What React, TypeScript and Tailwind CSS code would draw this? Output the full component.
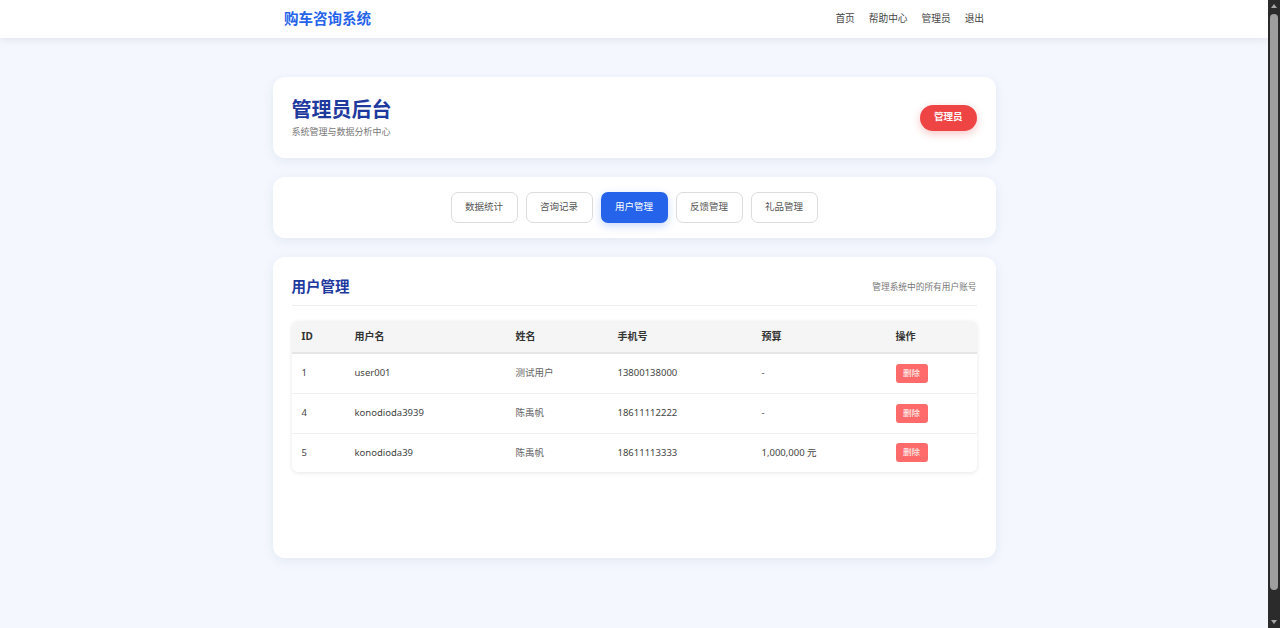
import React from "react";

const users = [
  { id: 1, username: "user001", name: "测试用户", phone: "13800138000", budget: "-" },
  { id: 4, username: "konodioda3939", name: "陈禹帆", phone: "18611112222", budget: "-" },
  { id: 5, username: "konodioda39", name: "陈禹帆", phone: "18611113333", budget: "1,000,000 元" },
];

const tabs = ["数据统计", "咨询记录", "用户管理", "反馈管理", "礼品管理"];

const font = { fontFamily: '"Noto Sans", "Noto Sans CJK SC", sans-serif' };

// the reference was taken with a classic dark scrollbar on the right
function Scrollbar() {
  return (
    <div className="w-[12px] h-full bg-[#2b2b2b] flex flex-col items-center">
      <div className="h-[12px] flex items-center justify-center">
        <div className="w-0 h-0 border-l-[3px] border-r-[3px] border-b-[4px] border-l-transparent border-r-transparent border-b-[#a8a8a8]" />
      </div>
      <div className="w-[8px] flex-1 mt-[2px] mb-[26px] rounded-full bg-[#9e9e9e]" />
      <div className="h-[12px] flex items-center justify-center">
        <div className="w-0 h-0 border-l-[3px] border-r-[3px] border-t-[4px] border-l-transparent border-r-transparent border-t-[#a8a8a8]" />
      </div>
    </div>
  );
}

export default function App() {
  return (
    <div className="h-[628px] flex overflow-hidden text-[#333]" style={font}>
      <div className="flex-1 min-w-0 bg-[#f4f7fe]">
        <nav className="h-[38px] bg-white shadow-[0_2px_8px_rgba(0,0,0,0.08)]">
          <div className="w-[700px] mx-auto h-full flex items-center justify-between">
            <div className="text-[14.5px] font-bold text-[#2563eb]">购车咨询系统</div>
            <div className="flex items-center gap-[14px] text-[9.7px] text-[#444]">
              <span>首页</span>
              <span>帮助中心</span>
              <span>管理员</span>
              <span>退出</span>
            </div>
          </div>
        </nav>

        <main className="w-[723px] mx-auto pt-[39px] flex flex-col gap-[19px]">
          <section className="h-[81px] bg-white rounded-[12px] shadow-[0_3px_12px_rgba(30,60,120,0.08)] px-[19px] flex items-center justify-between">
            <div>
              <h1 className="text-[20px] leading-[26px] font-bold text-[#1e3a9e]">管理员后台</h1>
              <p className="text-[9px] text-[#777] mt-[2px]">系统管理与数据分析中心</p>
            </div>
            <span className="h-[26px] px-[14px] rounded-full bg-[#ef4444] text-white text-[9.5px] font-bold flex items-center shadow-[0_3px_8px_rgba(239,68,68,0.3)]">
              管理员
            </span>
          </section>

          <section className="h-[61px] bg-white rounded-[12px] shadow-[0_3px_12px_rgba(30,60,120,0.08)] flex items-center justify-center gap-[8px]">
            {tabs.map((t) =>
              t === "用户管理" ? (
                <button key={t} className="w-[67px] h-[31px] rounded-[7px] bg-[#2563eb] text-white text-[9.5px] shadow-[0_3px_8px_rgba(37,99,235,0.25)]">
                  {t}
                </button>
              ) : (
                <button key={t} className="w-[67px] h-[31px] rounded-[7px] border border-[#dcdcdc] bg-white text-[#555] text-[9.5px]">
                  {t}
                </button>
              )
            )}
          </section>

          <section className="h-[301px] bg-white rounded-[12px] shadow-[0_3px_12px_rgba(30,60,120,0.08)] px-[19px] pt-[19px]">
            <div className="flex items-center justify-between pb-[8px] border-b border-[#eeeeee]">
              <h2 className="text-[14.5px] leading-[21px] font-bold text-[#1e3a9e]">用户管理</h2>
              <span className="text-[8.7px] text-[#777] mt-[2px]">管理系统中的所有用户账号</span>
            </div>
            <div className="mt-[15px] rounded-[6px] overflow-hidden shadow-[0_1px_4px_rgba(0,0,0,0.1)]">
              <table className="w-full border-collapse text-left">
                <thead>
                  <tr className="h-[32px] bg-[#f5f5f5] border-b-2 border-[#e6e6e6] text-[10px] text-[#333]">
                    <th className="w-[63px] pl-[10px] font-bold">ID</th>
                    <th className="w-[161px] font-bold">用户名</th>
                    <th className="w-[102px] font-bold">姓名</th>
                    <th className="w-[144px] font-bold">手机号</th>
                    <th className="w-[134px] font-bold">预算</th>
                    <th className="font-bold">操作</th>
                  </tr>
                </thead>
                <tbody className="text-[9.5px] text-[#444]">
                  {users.map((u, i) => (
                    <tr key={u.id} className={i < users.length - 1 ? "h-[40px] border-b border-[#f0f0f0]" : "h-[39px]"}>
                      <td className="pl-[10px]">{u.id}</td>
                      <td>{u.username}</td>
                      <td className="text-[#666]">{u.name}</td>
                      <td>{u.phone}</td>
                      <td>{u.budget}</td>
                      <td>
                        <button className="w-[32px] h-[19px] rounded-[3px] bg-[#ff6b6b] text-white text-[8.5px]">删除</button>
                      </td>
                    </tr>
                  ))}
                </tbody>
              </table>
            </div>
          </section>
        </main>
      </div>
      <Scrollbar />
    </div>
  );
}
